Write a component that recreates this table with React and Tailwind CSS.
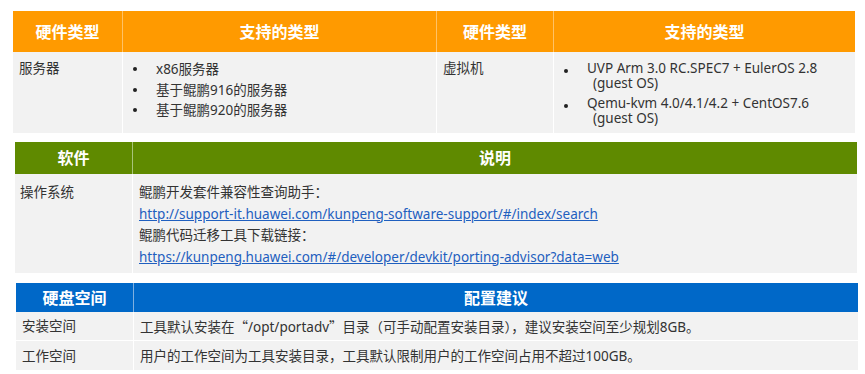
import React from "react";

const font = { fontFamily: '"Noto Sans", "Noto Sans CJK SC", sans-serif' };
const cjk = { fontFamily: '"Noto Sans CJK SC", sans-serif' };

function Bullet({ children }) {
  return (
    <li className="flex">
      <span className="w-[27px] shrink-0 pl-[4px] flex items-start">
        <span className="mt-[8px] w-[4px] h-[4px] rounded-full bg-[#222]"></span>
      </span>
      <span>{children}</span>
    </li>
  );
}

export default function App() {
  return (
    <div className="w-[865px] h-[374px] bg-white text-[13.5px] text-[#333] pt-[11px] leading-[20px]" style={font}>
      {/* hardware */}
      <div className="ml-[13px] w-[842px] grid grid-cols-[110px_314px_117px_301px]">
        <div className="bg-[#ff9a00] h-[41px] flex items-center justify-center text-white font-bold text-[16px] border-r border-[#ffc266]">硬件类型</div>
        <div className="bg-[#ff9a00] h-[41px] flex items-center justify-center text-white font-bold text-[16px] border-r border-[#ffc266]">支持的类型</div>
        <div className="bg-[#ff9a00] h-[41px] flex items-center justify-center text-white font-bold text-[16px] border-r border-[#ffc266]">硬件类型</div>
        <div className="bg-[#ff9a00] h-[41px] flex items-center justify-center text-white font-bold text-[16px]">支持的类型</div>

        <div className="bg-[#f2f2f2] h-[81px] pl-[6px] pt-[6px] border-r border-white">服务器</div>
        <div className="bg-[#f2f2f2] h-[81px] pl-[6px] pt-[7px] border-r border-white">
          <ul className="leading-[20.5px]">
            <Bullet>x86服务器</Bullet>
            <Bullet>基于鲲鹏916的服务器</Bullet>
            <Bullet>基于鲲鹏920的服务器</Bullet>
          </ul>
        </div>
        <div className="bg-[#f2f2f2] h-[81px] pl-[6px] pt-[6px] border-r border-white">虚拟机</div>
        <div className="bg-[#f2f2f2] h-[81px] pl-[6px] pt-[9px]">
          <ul className="leading-[15px] space-y-[5px]">
            <Bullet>UVP Arm 3.0 RC.SPEC7 + EulerOS 2.8<br /><span className="pl-[6px]">(guest OS)</span></Bullet>
            <Bullet>Qemu-kvm 4.0/4.1/4.2 + CentOS7.6<br /><span className="pl-[6px]">(guest OS)</span></Bullet>
          </ul>
        </div>
      </div>

      {/* software */}
      <div className="ml-[15px] mt-[9px] w-[842px] grid grid-cols-[118px_724px]">
        <div className="bg-[#5f8a00] h-[32px] flex items-center justify-center text-white font-bold text-[16px] border-r border-[#a8c47a]">软件</div>
        <div className="bg-[#5f8a00] h-[32px] flex items-center justify-center text-white font-bold text-[16px]">说明</div>

        <div className="bg-[#f2f2f2] h-[99px] pl-[5px] pt-[8px] border-r border-white">操作系统</div>
        <div className="bg-[#f2f2f2] h-[99px] pl-[6px] pt-[8px] leading-[21.5px]">
          <div>鲲鹏开发套件兼容性查询助手：</div>
          <div className="text-[#1f5fbf] underline">http://support-it.huawei.com/kunpeng-software-support/#/index/search</div>
          <div>鲲鹏代码迁移工具下载链接：</div>
          <div className="text-[#1f5fbf] underline">https://kunpeng.huawei.com/#/developer/devkit/porting-advisor?data=web</div>
        </div>
      </div>

      {/* disk */}
      <div className="ml-[16px] mt-[10px] w-[842px] grid grid-cols-[118px_724px]">
        <div className="bg-[#0068c8] h-[29px] flex items-center justify-center text-white font-bold text-[16px] border-r border-[#7fb0e0]">硬盘空间</div>
        <div className="bg-[#0068c8] h-[29px] flex items-center justify-center text-white font-bold text-[16px]">配置建议</div>

        <div className="bg-[#f2f2f2] h-[29px] flex items-center pl-[6px] border-r border-b border-white">安装空间</div>
        <div className="bg-[#f2f2f2] h-[29px] flex items-center pl-[6px] border-b border-white">
          <span>工具默认安装在<span style={cjk}>“</span>/opt/portadv<span style={cjk}>”</span>目录（可手动配置安装目录），建议安装空间至少规划8GB。</span>
        </div>
        <div className="bg-[#f2f2f2] h-[29px] flex items-center pl-[6px] border-r border-white">工作空间</div>
        <div className="bg-[#f2f2f2] h-[29px] flex items-center pl-[6px]">用户的工作空间为工具安装目录，工具默认限制用户的工作空间占用不超过100GB。</div>
      </div>
    </div>
  );
}
